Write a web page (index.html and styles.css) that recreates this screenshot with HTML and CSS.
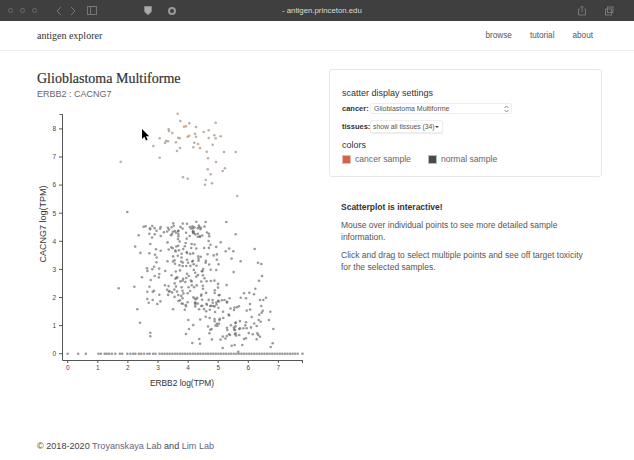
FILE: index.html
```html
<!DOCTYPE html>
<html lang="en">
<head>
    <meta charset="UTF-8">
    <title>antigen explorer</title>
    <link rel="stylesheet" href="styles.css">
</head>
<body>
    <div class="browser-bar">
        <div class="bar-icons">
            <span class="dot"></span><span class="dot"></span><span class="dot"></span>
            <svg class="bar-icon first" width="26" height="10" viewBox="0 0 26 10"><path d="M8 1 4 5l4 4M18 1l4 4-4 4"/></svg>
            <svg class="bar-icon" width="12" height="11" viewBox="0 0 12 11"><rect x="1.5" y="1.5" width="9" height="8"/><path d="M4.5 1.500v8"/></svg>
            <svg class="bar-icon shield" width="10" height="11" viewBox="0 0 10 11"><path d="M1.500 1.500h7v4c0 2-2 3.500-3.500 4-1.500-.5-3.500-2-3.500-4z"/></svg>
            <svg class="bar-icon wheel" width="10" height="10" viewBox="0 0 10 10"><circle cx="5" cy="5" r="3"/></svg>
        </div>
        <div class="url">- antigen.princeton.edu</div>
        <div class="bar-icons right">
            <svg class="bar-icon" width="10" height="11" viewBox="0 0 10 11"><path d="M2.500 4H1.500v6h7V4h-1M5 7V1M3.500 2.500 5 1l1.500 1.500"/></svg>
            <svg class="bar-icon" width="10" height="10" viewBox="0 0 10 10"><rect x="1.500" y="3" width="6" height="6"/><rect x="3.500" y="1" width="5.500" height="5.500"/></svg>
        </div>
    </div>

    <nav class="nav">
        <a class="brand">antigen explorer</a>
        <div class="nav-links">
            <a>browse</a>
            <a>tutorial</a>
            <a>about</a>
        </div>
    </nav>

    <main class="main">
        <section class="plot-col">
            <h1>Glioblastoma Multiforme</h1>
            <h2>ERBB2 : CACNG7</h2>
            <div class="plot">
                <svg id="scatter" width="270" height="285" viewBox="37 108 270 285"></svg>
                <svg class="cursor" width="8" height="12" viewBox="0 0 8 12"><path d="M0 0v10l2.400-2.200L4 11.500l1.600-.7-1.600-3.500h3.200z"/></svg>
            </div>
        </section>

        <section class="side-col">
            <div class="card">
                <h3>scatter display settings</h3>
                <div class="field">
                    <label>cancer:</label>
                    <div class="select wide">
                        <span>Glioblastoma Multiforme</span>
                        <svg width="5" height="8" viewBox="0 0 5 8"><path d="M.5 3 2.500 1l2 2M.5 5l2 2 2-2"/></svg>
                    </div>
                </div>
                <div class="field">
                    <label>tissues:</label>
                    <div class="select narrow">
                        <span>show all tissues (34)</span>
                        <i class="caret"></i>
                    </div>
                </div>
                <h4>colors</h4>
                <div class="legend">
                    <span class="swatch cancer"></span><span class="legend-label">cancer sample</span>
                    <span class="swatch normal"></span><span class="legend-label">normal sample</span>
                </div>
            </div>

            <div class="notes">
                <p><b>Scatterplot is interactive!</b></p>
                <p>Mouse over individual points to see more detailed sample information.</p>
                <p>Click and drag to select multiple points and see off target toxicity for the selected samples.</p>
            </div>
        </section>
    </main>

    <footer class="footer">© 2018-2020 <a>Troyanskaya Lab</a> and <a>Lim Lab</a></footer>

    <script src="script.js"></script>
</body>
</html>
```

FILE: styles.css
```css
body {
    font-family: "Liberation Sans", Arial, sans-serif;
    color: #444;
    background-color: #fff;
    margin: 0;
    height: 460px;
    overflow: hidden;
}

.browser-bar {
    height: 21px;
    background-color: #3f3f3f;
    display: flex;
    align-items: center;
    justify-content: space-between;
    padding: 0 20px 0 8px;
    position: relative;
}

.bar-icons {
    display: flex;
    align-items: center;
    gap: 7px;
}

.bar-icons.right { gap: 17px; }

.dot {
    width: 5px;
    height: 5px;
    border-radius: 50%;
    border: 1px solid #6a6a6a;
    box-sizing: border-box;
}

.bar-icon {
    fill: none;
    stroke: #777;
    stroke-width: 1;
}

.bar-icon.first { margin-left: 9px; }
.bar-icon.shield { margin-left: 38px; fill: #aaa; stroke: #888; }
.bar-icon.wheel { margin-left: 7px; stroke: #999; stroke-width: 2; }

.url {
    position: absolute;
    left: 282px;
    top: 5px;
    font-size: 7.800px;
    line-height: 11px;
    color: #ddd;
}

.nav {
    height: 30px;
    box-sizing: border-box;
    border-bottom: 1px solid #eee;
    display: flex;
    align-items: center;
    justify-content: space-between;
    padding: 0 41px 1px 37px;
}

.brand {
    font-family: "Liberation Serif", serif;
    font-size: 10px;
    color: #333;
}

.nav-links {
    display: flex;
    gap: 18px;
    font-size: 8.200px;
    color: #555;
}

.main {
    display: flex;
    padding: 18px 32px 0 37px;
    height: 379px;
    box-sizing: border-box;
}

.plot-col { width: 292px; }

h1 {
    font-family: "Liberation Serif", serif;
    font-size: 14px;
    font-weight: 400;
    line-height: 19px;
    color: #333;
    margin: 0;
    -webkit-text-stroke: 0.2px #333;
}

h2 {
    font-size: 9px;
    font-weight: 400;
    line-height: 12px;
    color: #666;
    margin: 0;
}

.plot {
    position: relative;
    margin-top: 8px;
}

#scatter { display: block; }

.cursor {
    position: absolute;
    left: 105px;
    top: 21px;
}

.side-col { width: 273px; }

.card {
    height: 108px;
    box-sizing: border-box;
    border: 1px solid #e8e8e8;
    border-radius: 3px;
    padding: 18px 12px 0;
}

h3 {
    font-size: 9px;
    font-weight: 400;
    line-height: 11px;
    color: #333;
    margin: 0 0 4px;
}

.field {
    display: flex;
    align-items: center;
    gap: 3px;
    margin-bottom: 6px;
}

.field label {
    font-size: 7.500px;
    font-weight: 700;
    color: #333;
    width: 25px;
}

.select {
    display: flex;
    align-items: center;
    justify-content: space-between;
    box-sizing: border-box;
    background-color: #fff;
    border: 1px solid #eee;
    border-radius: 2px;
    font-size: 7px;
    color: #555;
}

.select svg {
    fill: none;
    stroke: #666;
    stroke-width: 0.8;
}

.select.wide {
    width: 142px;
    height: 11px;
    padding: 0 2px 0 3px;
}

.select.narrow {
    width: 73px;
    height: 13px;
    padding: 0 3px 0 2px;
    box-shadow: 0 1px 1px rgba(0,0,0,0.08);
    font-size: 6.800px;
}

.caret {
    border: 2px solid transparent;
    border-top: 2.500px solid #444;
    border-bottom: 0;
}

h4 {
    font-size: 9px;
    font-weight: 400;
    line-height: 11px;
    color: #333;
    margin: 7px 0 3px;
}

.legend {
    display: flex;
    align-items: center;
    font-size: 8.600px;
    color: #666;
}

.swatch {
    width: 9px;
    height: 9px;
    box-sizing: border-box;
    border: 1px solid #ddd;
}

.swatch.cancer { background-color: #d4634a; border-color: #e8bbae; }
.swatch.normal { background-color: #4a4a4a; border-color: #bbb; }

.legend-label {
    margin: 0 17px 0 4px;
}

.notes {
    padding: 24px 12px 0;
    font-size: 8.500px;
    line-height: 12px;
    color: #555;
}

.notes p { margin: 0 0 6px; }
.notes b { color: #333; }

.footer {
    padding-left: 37px;
    padding-top: 10px;
    font-size: 9.100px;
    line-height: 12px;
    color: #444;
}

.footer a { color: #667; }

.axis {
    stroke: #555;
    stroke-width: 1;
    fill: none;
}

.tick-label {
    font-family: "Liberation Sans", Arial, sans-serif;
    font-size: 6.500px;
    fill: #444;
}

.axis-label {
    font-family: "Liberation Sans", Arial, sans-serif;
    font-size: 9px;
    fill: #333;
}

.axis-label.x { font-size: 8.400px; }

.pt { fill: #666; fill-opacity: 0.65; }
.pt.cancer { fill: #a8948a; fill-opacity: 0.75; }
.pt.hot { fill: #d9925f; fill-opacity: 0.8; }
```

FILE: script.js
```js
const NS = 'http://www.w3.org/2000/svg';
const svg = document.getElementById('scatter');

// axis scale, page pixels per data unit
const x0 = 67.7, xUnit = 30.1;
const y0 = 353.7, yUnit = 28.1;

// upper group, read off the plot (page pixels)
const upper = [
    [177.7,113.7],[180.3,121],[189.3,123.3],[215.7,122.7],[184,126.7],[186,126.3],[196,127],[168.7,129.3],
    [169,131],[172.3,133],[203.7,132],[208.7,130.3],[195,133.7],[214.3,135.3],[189.3,135.7],[187.7,136.7],
    [196,136.7],[208.7,138],[215.7,138.3],[220.7,136.3],[178.3,137.7],[179.7,138.3],[159.7,138.3],[166,141],
    [168,141.3],[165,143],[176,142.3],[194.3,142.7],[198,144],[212.7,144.7],[153.3,146],[180,148],[193.3,147.3],
    [200,148],[177,151],[206.7,151.7],[224,152],[235.7,152],[159.7,157.7],[208,158.3],[120.7,161.7],[216,162],
    [225,168.3],[222.7,171],[207.7,169.3],[210.7,174.3],[183,177.3],[187.7,178.7],[205.7,180],[205,184.7],
    [212,183.3],[237.3,196],[127.3,212],[226.300,222],[173.3,223.3],[187,223.7],[196.3,221.7],[205.7,222]
];
const hot = [[184,126.7],[186,126.3],[198,144],[189.3,135.7]];

// lower outliers, read off the plot (page pixels)
const lower = [
    [138.7,235.3],[150.3,244],[149.3,253.3],[156,249.3],[160.7,250.7],[147,268.3],[152.3,269.3],[150.7,280],
    [154.7,276],[159.3,274],[165.3,271],[147.3,291.7],[152.7,291.7],[154,290.7],[147.3,299],[148.7,302.7],
    [152.7,300],[157.3,304],[118.7,288.3],[134.3,286.7],[137.3,309.3],[140,322.7],[150.3,332.7],[150.3,336.3],
    [186,334],[189,329],[188.3,320],[192.3,343],[200,343.7],[222.7,348],[231.7,345.7],[234.7,345],[242.3,345],
    [238.3,351.7],[270.7,347],[272.7,343.3],[254.7,249],[258,262.7],[261.3,264],[262,276],[259,280.7],[240.7,261.3],
    [233.3,251.3],[225.7,251.3],[235.7,234.3],[266,297.7],[263.3,300],[255.3,288.7],[254,294.3],[249.3,292.7],
    [244,293.3],[240.7,297.7],[246,298.3],[250,304],[251.7,317],[260,300],[261.3,306],[261.7,312.7],[259.3,314.7],
    [258.7,320],[256.7,326],[270.3,311.7],[269,320],[273.3,329],[262.7,310.7],[260.7,321.7],[258.3,335],[260,336.7],
    [256.7,339.3],[252.7,334.3],[246,338.300],[244,339],[246.7,328.3],[243.3,328.3],[239.3,329],[235,330],
    [239.3,335],[235,334.3],[230,335],[227.300,330]
];

// small seeded generator so the cloud is the same on every load
let seed = 20;
function rnd() {
    seed = (seed * 16807) % 2147483647;
    return seed / 2147483647;
}
function around(cx, spread) {
    return cx + (rnd() + rnd() + rnd() - 1.5) * spread;
}

function el(name, attrs, parent) {
    const node = document.createElementNS(NS, name);
    Object.keys(attrs).forEach(k => node.setAttribute(k, attrs[k]));
    (parent || svg).appendChild(node);
    return node;
}

function dot(x, y, cls) {
    el('circle', { cx: x.toFixed(1), cy: y.toFixed(1), r: 1.3, class: 'pt ' + cls });
}

function drawAxes() {
    const top = 114, bottom = 360, axisX = 62.5, right = 302;
    el('path', { class: 'axis', d: `M59.5 ${top}.5H${axisX}V${bottom}.5H${right}` });
    for (let v = 0; v <= 8; v++) {
        const y = y0 - v * yUnit;
        el('path', { class: 'axis', d: `M59 ${y}H${axisX}` });
        el('text', { class: 'tick-label', x: 56, y: y + 2.3, 'text-anchor': 'end' }).textContent = v;
    }
    for (let v = 0; v <= 7; v++) {
        const x = x0 + v * xUnit;
        el('path', { class: 'axis', d: `M${x} 360V363` });
        el('text', { class: 'tick-label', x: x, y: 369.500, 'text-anchor': 'middle' }).textContent = v;
    }
    el('path', { class: 'axis', d: 'M302.500 360V363' });
    el('text', { class: 'axis-label x', x: 182, y: 386, 'text-anchor': 'middle' }).textContent = 'ERBB2 log(TPM)';
    el('text', { class: 'axis-label', transform: 'translate(46 224) rotate(-90)', 'text-anchor': 'middle' }).textContent = 'CACNG7 log(TPM)';
}

function drawPoints() {
    upper.forEach(p => {
        const isHot = hot.some(h => h[0] === p[0] && h[1] === p[1]);
        dot(p[0], p[1], isHot ? 'hot' : (p[1] > 200 ? '' : 'cancer'));
    });
    lower.forEach(p => dot(p[0], p[1], ''));

    // main cloud, drifts right as it goes down
    for (let i = 0; i < 210; i++) {
        const y = 226 + rnd() * 84;
        const x = around(178 + (y - 226) * 0.28, 44);
        dot(x, y, '');
    }
    // tight patch near the top of the cloud
    for (let i = 0; i < 22; i++) {
        dot(around(187, 18), around(231, 8), '');
    }
    // lower right cloud
    for (let i = 0; i < 65; i++) {
        const y = 300 + rnd() * 40;
        dot(around(222, 30), y, '');
    }

    // zero line
    [0, .35, .6, 1.02, 1.1, 1.23, 1.3, 1.38, 1.47, 1.58, 1.73, 1.81].forEach(v => dot(x0 + v * xUnit, y0, ''));
    for (let v = 1.98; v < 3; v += 0.07 + rnd() * 0.05) dot(x0 + v * xUnit, y0, '');
    for (let v = 3.05; v < 7.68; v += 0.085) dot(x0 + v * xUnit, y0, '');
    dot(x0 + 7.8 * xUnit, y0, '');
}

drawAxes();
drawPoints();
```
